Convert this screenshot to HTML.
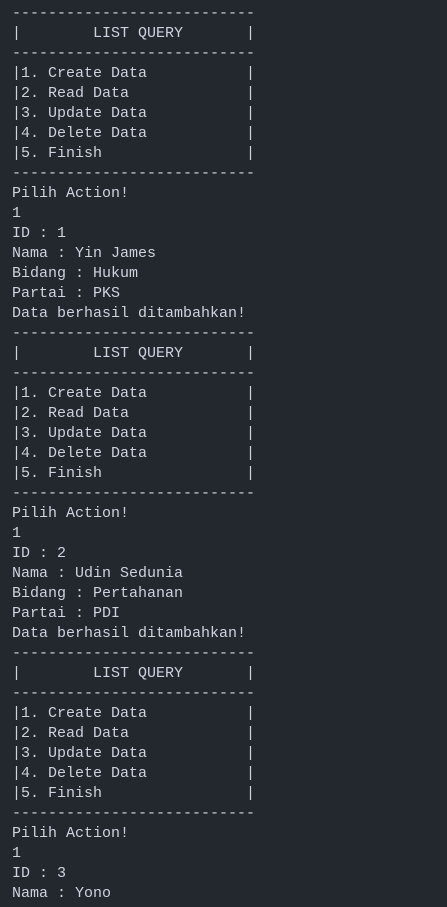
<!DOCTYPE html>
<html><head><style>
html,body{margin:0;background:#23272e;width:447px;height:907px;overflow:hidden}
pre{margin:0;padding:4px 0 0 12px;font:15px/20px "Liberation Mono",monospace;color:#cdd3de}
</style></head><body><pre>---------------------------
|        LIST QUERY       |
---------------------------
|1. Create Data           |
|2. Read Data             |
|3. Update Data           |
|4. Delete Data           |
|5. Finish                |
---------------------------
Pilih Action!
1
ID : 1
Nama : Yin James
Bidang : Hukum
Partai : PKS
Data berhasil ditambahkan!
---------------------------
|        LIST QUERY       |
---------------------------
|1. Create Data           |
|2. Read Data             |
|3. Update Data           |
|4. Delete Data           |
|5. Finish                |
---------------------------
Pilih Action!
1
ID : 2
Nama : Udin Sedunia
Bidang : Pertahanan
Partai : PDI
Data berhasil ditambahkan!
---------------------------
|        LIST QUERY       |
---------------------------
|1. Create Data           |
|2. Read Data             |
|3. Update Data           |
|4. Delete Data           |
|5. Finish                |
---------------------------
Pilih Action!
1
ID : 3
Nama : Yono</pre></body></html>
